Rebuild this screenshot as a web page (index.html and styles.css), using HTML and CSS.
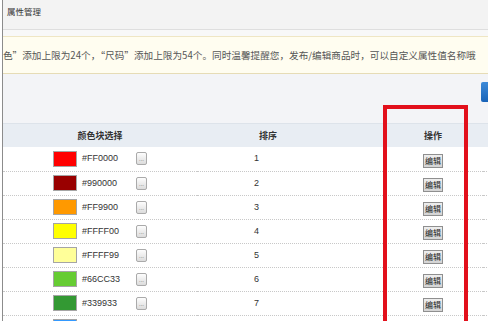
FILE: index.html
```html
<!DOCTYPE html>
<html lang="zh-CN">
<head>
    <meta charset="UTF-8">
    <title>属性管理</title>
    <link rel="stylesheet" href="styles.css">
</head>
<body>
    <div class="page">
        <div class="titlebar">属性管理</div>
        <div class="gap"></div>
        <div class="notice">色”添加上限为24个，“尺码”添加上限为54个。同时温馨提醒您，发布/编辑商品时，可以自定义属性值名称哦</div>
        <div class="toolbar">
            <span class="btn-blue"></span>
        </div>
        <table class="attr-table">
            <colgroup>
                <col class="c-color">
                <col class="c-sort">
                <col class="c-op">
                <col class="c-rest">
            </colgroup>
            <thead>
                <tr>
                    <th class="th-color">颜色块选择</th>
                    <th class="th-sort">排序</th>
                    <th class="th-op">操作</th>
                    <th></th>
                </tr>
            </thead>
            <tbody>
                <tr>
                    <td><div class="pick"><span class="swatch" style="background:#FF0000"></span><span class="hex">#FF0000</span><span class="more">...</span></div></td>
                    <td class="num">1</td>
                    <td class="op"><span class="edit">编辑</span></td>
                    <td></td>
                </tr>
                <tr>
                    <td><div class="pick"><span class="swatch" style="background:#990000"></span><span class="hex">#990000</span><span class="more">...</span></div></td>
                    <td class="num">2</td>
                    <td class="op"><span class="edit">编辑</span></td>
                    <td></td>
                </tr>
                <tr>
                    <td><div class="pick"><span class="swatch" style="background:#FF9900"></span><span class="hex">#FF9900</span><span class="more">...</span></div></td>
                    <td class="num">3</td>
                    <td class="op"><span class="edit">编辑</span></td>
                    <td></td>
                </tr>
                <tr>
                    <td><div class="pick"><span class="swatch" style="background:#FFFF00"></span><span class="hex">#FFFF00</span><span class="more">...</span></div></td>
                    <td class="num">4</td>
                    <td class="op"><span class="edit">编辑</span></td>
                    <td></td>
                </tr>
                <tr>
                    <td><div class="pick"><span class="swatch" style="background:#FFFF99"></span><span class="hex">#FFFF99</span><span class="more">...</span></div></td>
                    <td class="num">5</td>
                    <td class="op"><span class="edit">编辑</span></td>
                    <td></td>
                </tr>
                <tr>
                    <td><div class="pick"><span class="swatch" style="background:#66CC33"></span><span class="hex">#66CC33</span><span class="more">...</span></div></td>
                    <td class="num">6</td>
                    <td class="op"><span class="edit">编辑</span></td>
                    <td></td>
                </tr>
                <tr>
                    <td><div class="pick"><span class="swatch" style="background:#339933"></span><span class="hex">#339933</span><span class="more">...</span></div></td>
                    <td class="num">7</td>
                    <td class="op"><span class="edit">编辑</span></td>
                    <td></td>
                </tr>
                <tr>
                    <td><div class="pick"><span class="swatch" style="background:#3399FF"></span><span class="hex">#3399FF</span><span class="more">...</span></div></td>
                    <td class="num">8</td>
                    <td class="op"><span class="edit">编辑</span></td>
                    <td></td>
                </tr>
            </tbody>
        </table>
        <div class="mark"></div>
    </div>
</body>
</html>
```

FILE: styles.css
```css
html, body {
    margin: 0;
    padding: 0;
    overflow: hidden;
    background: #fff;
}

body {
    font-family: "Noto Sans CJK SC", "Liberation Sans", sans-serif;
    color: #333;
}

.page {
    position: relative;
    margin-left: 2px;
    border-left: 1px solid #8c8c8c;
    height: 321px;
    overflow: hidden;
}

.titlebar {
    height: 29px;
    line-height: 22px;
    padding-left: 4px;
    font-size: 8.5px;
    background: #f3f3f3;
    border-bottom: 1px solid #dedede;
}

.gap {
    height: 6px;
    background: #f8f8f8;
}

.notice {
    height: 36px;
    line-height: 36px;
    font-size: 9.65px;
    color: #555;
    white-space: nowrap;
    overflow: hidden;
    background: #fffdf0;
    border-top: 1px solid #efe6c4;
    border-bottom: 1px solid #e6dcb6;
}

.toolbar {
    display: flex;
    height: 49px;
    overflow: hidden;
    background: #f3f4f7;
}

.btn-blue {
    width: 37px;
    height: 20px;
    margin: 8px -30px 0 auto;
    border-radius: 2px;
    background: linear-gradient(#3d8ad8, #1863b8);
}

.attr-table {
    width: 620px;
    table-layout: fixed;
    border-collapse: collapse;
}

.c-color { width: 194px; }
.c-sort { width: 186px; }
.c-op { width: 100px; }

.attr-table th {
    height: 23px;
    font-size: 9px;
    font-weight: bold;
    line-height: 1;
    color: #333;
    background: #e8edf3;
    border-top: 1px solid #dde3ea;
    padding: 0;
}

.th-color, .th-op {
    text-align: center;
}

.th-sort {
    text-align: left;
    padding-left: 62px !important;
}

.attr-table tbody tr {
    height: 24px;
}

.attr-table td {
    height: 23px;
    padding: 0;
    line-height: 1;
    border-bottom: 1px dotted #c8c8c8;
    box-sizing: border-box;
}

.pick {
    display: flex;
    align-items: center;
    justify-content: center;
}

.swatch {
    width: 22px;
    height: 14px;
    border: 1px solid #a5a5a5;
}

.hex {
    width: 54px;
    margin-left: 5px;
    font-family: "Liberation Sans", sans-serif;
    font-size: 9px;
    color: #333;
}

.more {
    width: 9px;
    height: 11px;
    line-height: 13px;
    font-family: "Liberation Sans", sans-serif;
    font-size: 6px;
    text-align: center;
    color: #666;
    border: 1px solid #aaa;
    border-radius: 2px;
    background: linear-gradient(#fdfdfd, #dcdcdc);
}

.num {
    padding-left: 57px !important;
    font-family: "Liberation Sans", sans-serif;
    font-size: 9px;
}

.op {
    text-align: center;
}

.edit {
    display: inline-block;
    width: 18px;
    height: 12px;
    line-height: 12px;
    font-size: 8px;
    color: #222;
    text-align: center;
    vertical-align: middle;
    border: 1px solid #8f8f8f;
    background: linear-gradient(#eeeeee, #d4d4d4);
}

/* 红色标注框 */
.mark {
    position: absolute;
    left: 380px;
    top: 105px;
    width: 77px;
    height: 240px;
    border: 4px solid #e2101b;
}
```
